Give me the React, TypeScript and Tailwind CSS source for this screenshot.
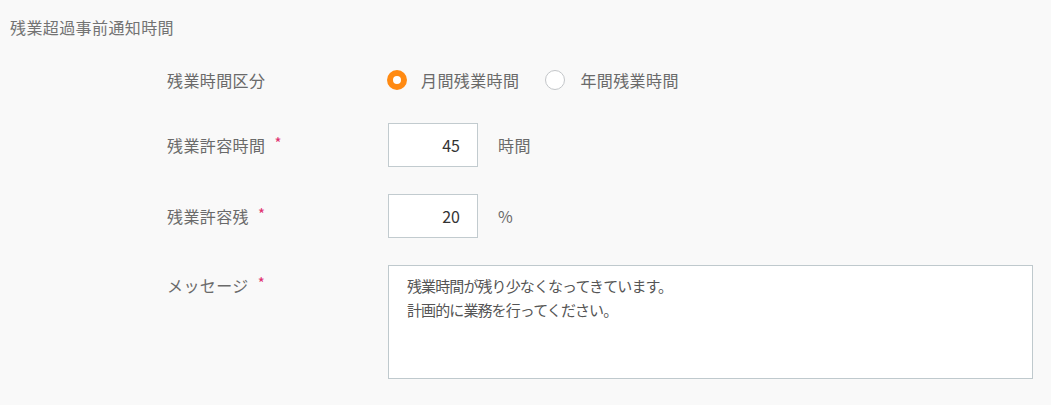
import React from "react";

const font = { fontFamily: '"Noto Sans CJK JP", "Noto Sans", sans-serif' };

function Req() {
  return <span className="ml-[9px] text-[15px] leading-none text-[#e0306f] relative -top-[3px]">*</span>;
}

export default function App() {
  return (
    <div className="w-[1051px] h-[405px] bg-[#f9f9f9] text-[#6a6a6a] overflow-hidden tracking-[0.4px]" style={font}>
      <div className="pl-[10px] pt-[15px] text-[16px] leading-[24px] text-[#737373]">残業超過事前通知時間</div>

      <div className="pl-[167px] mt-[19px] flex flex-col">
        {/* radio row */}
        <div className="flex items-center h-[44px]">
          <div className="w-[220px] text-[16px] leading-[24px]">残業時間区分</div>
          <div className="flex items-center">
            <span className="w-[20px] h-[20px] rounded-full border-[6.5px] border-[#ff8a12] bg-white box-border" />
            <span className="ml-[14px] text-[16px] leading-[24px]">月間残業時間</span>
            <span className="ml-[26px] w-[20px] h-[20px] rounded-full border-[1.5px] border-[#c3c6c9] bg-white box-border" />
            <span className="ml-[15px] text-[16px] leading-[24px]">年間残業時間</span>
          </div>
        </div>

        {/* row 2 */}
        <div className="flex items-center h-[44px] mt-[21px]">
          <div className="w-[221px] text-[16px] leading-[24px] flex items-center">
            残業許容時間<Req />
          </div>
          <div className="w-[90px] h-[44px] border border-[#c2cbcf] bg-white flex items-center justify-end pr-[17px] text-[16px] text-[#333] tracking-normal">
            45
          </div>
          <span className="ml-[20px] text-[16px] leading-[24px]">時間</span>
        </div>

        {/* row 3 */}
        <div className="flex items-center h-[44px] mt-[27px]">
          <div className="w-[221px] text-[16px] leading-[24px] flex items-center">
            残業許容残<Req />
          </div>
          <div className="w-[90px] h-[44px] border border-[#c2cbcf] bg-white flex items-center justify-end pr-[17px] text-[16px] text-[#333] tracking-normal">
            20
          </div>
          <span className="ml-[20px] text-[16px] leading-[24px]">%</span>
        </div>

        {/* message */}
        <div className="flex items-start mt-[27px]">
          <div className="w-[221px] pt-[8px] text-[16px] leading-[24px] flex items-center">
            メッセージ<Req />
          </div>
          <div className="w-[645px] h-[114px] border border-[#bfc9cd] bg-white pl-[18px] pt-[8px] text-[15px] leading-[24px] tracking-[-0.9px] text-[#555]">
            <div>残業時間が残り少なくなってきています。</div>
            <div>計画的に業務を行ってください。</div>
          </div>
        </div>
      </div>
    </div>
  );
}
